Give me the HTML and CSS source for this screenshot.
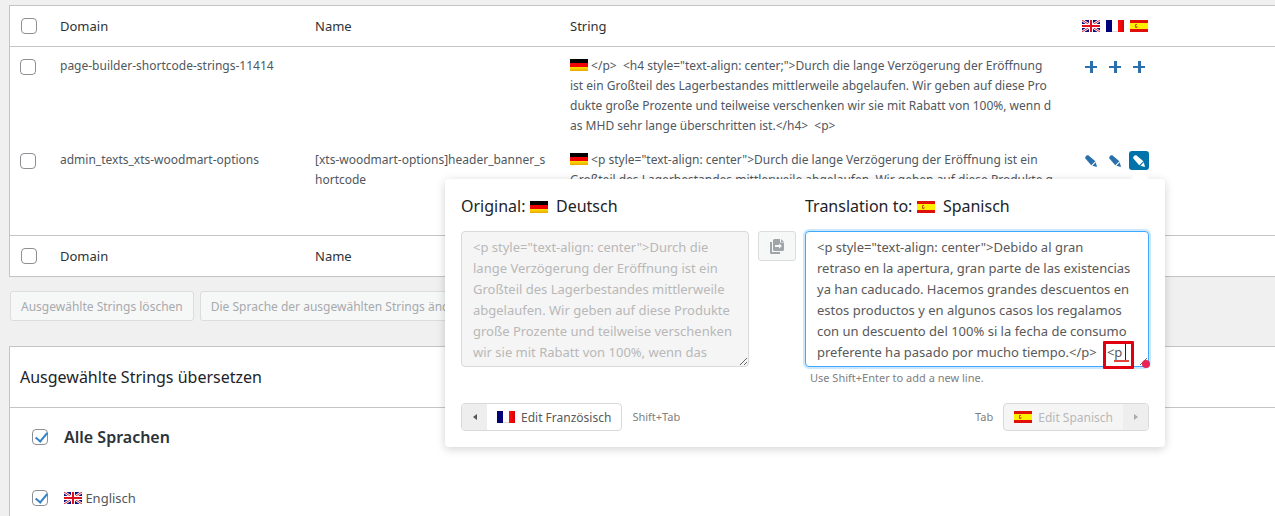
FILE: index.html
```html
<!DOCTYPE html>
<html lang="de">
<head>
<meta charset="utf-8">
<title>String-Übersetzung</title>
<link rel="stylesheet" href="styles.css">
</head>
<body>
<svg class="sprite" aria-hidden="true">
  <defs>
    <linearGradient id="gold" x1="0" y1="0" x2="0" y2="1"><stop offset="0" stop-color="#ffe000"/><stop offset="1" stop-color="#e8a800"/></linearGradient>
    <linearGradient id="red" x1="0" y1="0" x2="1" y2="0"><stop offset="0" stop-color="#ff1010"/><stop offset="1" stop-color="#d80000"/></linearGradient>
  </defs>
  <symbol id="de" viewBox="0 0 18 12"><path fill="#000" d="M0 0h18v4H0z"/><path fill="#f00000" d="M0 4h18v4H0z"/><path fill="url(#gold)" d="M0 8h18v4H0z"/></symbol>
  <symbol id="fr" viewBox="0 0 18 12"><path fill="#000078" d="M0 0h6v12H0z"/><path fill="#fff" d="M6 0h6v12H6z"/><path fill="#ddd" d="M6 11h6v1H6z"/><path fill="url(#red)" d="M12 0h6v12h-6z"/></symbol>
  <symbol id="es" viewBox="0 0 18 12"><path fill="#e01008" d="M0 0h18v12H0z"/><path fill="#ffee00" d="M0 3h18v6H0z"/><path fill="none" stroke="#c05010" d="M7 4.5H5.500v3H7V6"/></symbol>
  <symbol id="gb" viewBox="0 0 18 12"><path fill="#10107c" d="M0 0h18v12H0z"/><path stroke="#fff" stroke-width="2.600" d="M0 0l18 12M18 0L0 12"/><path stroke="#d82030" d="M0 0l18 12M18 0L0 12"/><path stroke="#fff" stroke-width="4" d="M9 0v12M0 6h18"/><path stroke="#e01020" stroke-width="2" d="M9 0v12M0 6h18"/></symbol>
  <symbol id="plus" viewBox="0 0 12 12"><path fill="currentColor" d="M5 0h3v5h4v2H8v5H5V7H0V5h5z"/></symbol>
  <symbol id="pencil" viewBox="0 0 12 12"><path fill="currentColor" d="M0 3Q.3.400 3 0L10.400 6.200 6.200 10.200zM10.800 7.200l1.200 4.800L7.300 10.700z"/></symbol>
  <symbol id="copy" viewBox="0 0 14 15"><path fill="currentColor" d="M0 3h2v10h8v2H1.500Q0 15 0 13.500z"/><path fill="currentColor" d="M4.500 0H10v3.500h4v7q0 1.500-1.500 1.500h-8Q3 12 3 10.500v-9Q3 0 4.500 0zM11 0l3 3h-3zM5 6v2h4v1.600L12 7 9 4.400V6z" fill-rule="evenodd"/></symbol>
</svg>

<main class="page">
  <table class="strings">
    <colgroup><col class="col-check"><col class="col-text"><col class="col-text"><col class="col-string"><col></colgroup>
    <thead>
      <tr>
        <th><input class="check" type="checkbox" aria-label="Alle auswählen"></th>
        <th>Domain</th><th>Name</th><th>String</th>
        <th><div class="langs"><svg class="flag"><use href="#gb"/></svg><svg class="flag"><use href="#fr"/></svg><svg class="flag"><use href="#es"/></svg></div></th>
      </tr>
    </thead>
    <tbody>
      <tr>
        <td><input class="check" type="checkbox" aria-label="page-builder-shortcode-strings-11414"></td>
        <td>page-builder-shortcode-strings-11414</td>
        <td></td>
        <td class="string"><svg class="flag"><use href="#de"/></svg> &lt;/p&gt;&nbsp; &lt;h4 style="text-align: center;"&gt;Durch die lange Verzögerung der Eröffnung<br>ist ein Großteil des Lagerbestandes mittlerweile abgelaufen. Wir geben auf diese Pro<br>dukte große Prozente und teilweise verschenken wir sie mit Rabatt von 100%, wenn d<br>as MHD sehr lange überschritten ist.&lt;/h4&gt;&nbsp; &lt;p&gt;</td>
        <td><div class="langs"><button class="act" aria-label="Englisch hinzufügen"><svg><use href="#plus"/></svg></button><button class="act" aria-label="Französisch hinzufügen"><svg><use href="#plus"/></svg></button><button class="act" aria-label="Spanisch hinzufügen"><svg><use href="#plus"/></svg></button></div></td>
      </tr>
      <tr>
        <td><input class="check" type="checkbox" aria-label="admin_texts_xts-woodmart-options"></td>
        <td>admin_texts_xts-woodmart-options</td>
        <td>[xts-woodmart-options]header_banner_s<br>hortcode</td>
        <td class="string"><svg class="flag"><use href="#de"/></svg> &lt;p style="text-align: center"&gt;Durch die lange Verzögerung der Eröffnung ist ein<br>Großteil des Lagerbestandes mittlerweile abgelaufen. Wir geben auf diese Produkte g<br><br><br></td>
        <td><div class="langs"><button class="act" aria-label="Englisch bearbeiten"><svg><use href="#pencil"/></svg></button><button class="act" aria-label="Französisch bearbeiten"><svg><use href="#pencil"/></svg></button><button class="act act-on" aria-label="Spanisch bearbeiten"><svg><use href="#pencil"/></svg></button></div></td>
      </tr>
    </tbody>
    <tfoot>
      <tr>
        <th><input class="check" type="checkbox" aria-label="Alle auswählen"></th>
        <th>Domain</th><th>Name</th><th></th><th></th>
      </tr>
    </tfoot>
  </table>

  <div class="bulk">
    <button class="bulk-btn" disabled>Ausgewählte Strings löschen</button>
    <button class="bulk-btn" disabled>Die Sprache der ausgewählten Strings ändern</button>
  </div>

  <section class="panel">
    <h2 class="panel-title">Ausgewählte Strings übersetzen</h2>
    <div class="panel-body">
      <label class="lang-row lang-all"><input class="check" type="checkbox" checked>Alle Sprachen</label>
      <label class="lang-row"><input class="check" type="checkbox" checked><span><svg class="flag"><use href="#gb"/></svg> Englisch</span></label>
    </div>
  </section>

  <div class="popover" role="dialog" aria-label="Übersetzung bearbeiten">
    <div class="editor">
      <label class="editor-title" for="original">Original: <svg class="flag"><use href="#de"/></svg>&nbsp; Deutsch</label>
      <label class="editor-title title-target" for="target">Translation to: <svg class="flag"><use href="#es"/></svg>&nbsp; Spanisch</label>
      <textarea class="area" id="original" disabled>&lt;p style="text-align: center"&gt;Durch die
lange Verzögerung der Eröffnung ist ein
Großteil des Lagerbestandes mittlerweile
abgelaufen. Wir geben auf diese Produkte
große Prozente und teilweise verschenken
wir sie mit Rabatt von 100%, wenn das</textarea>
      <button class="copy" disabled aria-label="Original kopieren"><svg><use href="#copy"/></svg></button>
      <div class="target">
        <textarea class="area area-focus" id="target" spellcheck="false">&lt;p style="text-align: center"&gt;Debido al gran
retraso en la apertura, gran parte de las existencias
ya han caducado. Hacemos grandes descuentos en
estos productos y en algunos casos los regalamos
con un descuento del 100% si la fecha de consumo
preferente ha pasado por mucho tiempo.&lt;/p&gt;   &lt;p</textarea>
        <span class="mark"></span>
        <span class="dot"></span>
      </div>
      <p class="hint">Use Shift+Enter to add a new line.</p>
    </div>
    <div class="nav">
      <button class="nav-btn"><span class="nav-arrow"><i class="tri tri-left"></i></span><span class="nav-label"><svg class="flag"><use href="#fr"/></svg>Edit Französisch</span></button>
      <span class="key">Shift+Tab</span>
      <span class="key key-right">Tab</span>
      <button class="nav-btn" disabled><span class="nav-label"><svg class="flag"><use href="#es"/></svg>Edit Spanisch</span><span class="nav-arrow"><i class="tri tri-right"></i></span></button>
    </div>
  </div>
</main>
</body>
</html>
```

FILE: styles.css
```css
* { box-sizing: border-box; }

body {
  margin: 0;
  background: #f0f0f1;
  color: #50575e;
  font: 12px/20px "Noto Sans", "Open Sans", sans-serif;
}

button, textarea { font-family: inherit; }

.sprite { position: absolute; width: 0; height: 0; }

.page {
  position: relative;
  display: flex;
  flex-direction: column;
  min-height: 100vh;
  padding: 5px 0 0 9px;
}

.flag { width: 18px; height: 12px; vertical-align: -1px; }

/* Strings table */
.strings {
  width: 100%;
  table-layout: fixed;
  border-collapse: separate;
  border-spacing: 0;
  background: #fff;
  border: 1px solid #c3c4c7;
  border-right: 0;
}
.col-check { width: 40px; }
.col-text { width: 255px; }
.col-string { width: 512px; }

.strings th {
  height: 41px;
  padding: 0 10px;
  font-size: 13px;
  font-weight: 400;
  text-align: left;
  color: #2c3338;
}
.strings thead th { border-bottom: 1px solid #c3c4c7; }
.strings tfoot th { border-top: 1px solid #c3c4c7; }
.strings td { padding: 9px 10px 5px; vertical-align: top; white-space: nowrap; }
.strings tr > :first-child { padding-right: 0; }
.strings td:first-child { padding-top: 12px; }
.strings .check { margin-left: 1px; }
.strings td .check { margin-left: 0; }
.strings td .langs { padding-top: 1px; }

.check {
  appearance: none;
  display: block;
  flex: none;
  width: 16px;
  height: 16px;
  margin: 0;
  border: 1px solid #8c8f94;
  border-radius: 4px;
  background: #fff;
}
.check:checked::before {
  content: "";
  display: block;
  width: 5px;
  height: 10px;
  margin: 0 0 0 5px;
  border: solid #3582c4;
  border-width: 0 2px 2px 0;
  transform: rotate(40deg);
}

.langs { display: flex; gap: 6px; }
.act {
  display: flex;
  align-items: center;
  justify-content: center;
  width: 20px;
  height: 19px;
  margin: 0 -1px;
  padding: 0;
  border: 0;
  border-radius: 3px;
  background: none;
  color: #2a70ad;
}
.act svg { width: 12px; height: 12px; }
.act-on { background: #0073aa; color: #fff; }

/* Bulk actions */
.bulk { display: flex; gap: 6px; padding: 14px 0 0 1px; }
.bulk-btn {
  height: 30px;
  padding: 0 10px;
  border: 1px solid #dcdcde;
  border-radius: 3px;
  background: #f6f7f7;
  color: #a7aaad;
  font-size: 12px;
  white-space: nowrap;
}

/* Translate panel */
.panel {
  flex: 1;
  margin-top: 25px;
  background: #fff;
  border: 1px solid #c3c4c7;
  border-width: 1px 0 0 1px;
}
.panel-title {
  margin: 0;
  padding: 20px 10px;
  border-bottom: 1px solid #c3c4c7;
  color: #1d2327;
  font-size: 16px;
  font-weight: 400;
}
.panel-body { display: flex; flex-direction: column; gap: 40px; padding: 18px 22px 0; }
.lang-row { display: flex; align-items: center; gap: 16px; height: 21px; font-size: 13px; }
.lang-all { color: #2c3338; font-size: 16px; font-weight: 600; }

/* Translation popover */
.popover {
  position: absolute;
  top: 179px;
  left: 445px;
  width: 720px;
  padding: 16px;
  border-radius: 4px;
  background: #fff;
  box-shadow: 0 2px 10px rgba(0, 0, 0, .18);
}
.popover::before {
  content: "";
  position: absolute;
  top: -6px;
  right: 17px;
  width: 16px;
  height: 16px;
  background: #fff;
  transform: rotate(45deg);
}

.editor { display: grid; grid-template-columns: 288px 38px 1fr; column-gap: 9px; align-items: start; }
.editor-title { margin-bottom: 14px; color: #1d2327; font-size: 16px; line-height: 22px; }
.title-target { grid-column: 3; }
.area {
  display: block;
  width: 100%;
  height: 136px;
  padding: 5px 11px 3px;
  border: 1px solid #d9d9d9;
  border-radius: 4px;
  background: #fff;
  color: #595959;
  font-size: 13px;
  line-height: 21px;
  white-space: pre;
  overflow: hidden;
  resize: both;
}
.area:disabled { background: #f5f5f5; color: #b8b8b8; }
.area-focus { border-color: #40a9ff; box-shadow: 0 0 0 2px #cce8ff; outline: 0; }
.copy {
  display: flex;
  align-items: center;
  justify-content: center;
  height: 30px;
  padding: 0;
  border: 1px solid #dcdcde;
  border-radius: 3px;
  background: #f6f7f7;
  color: #a0a5aa;
}
.copy svg { width: 14px; height: 15px; }

.target { position: relative; }
.mark {
  position: absolute;
  right: 15px;
  bottom: -2px;
  width: 31px;
  height: 28px;
  border: 3px solid #e00010;
  border-radius: 1px;
}
.mark::before {
  content: "";
  position: absolute;
  top: 0;
  right: 5px;
  width: 1px;
  height: 16px;
  background: #222;
}
.mark::after {
  content: "";
  position: absolute;
  right: 2px;
  bottom: 4px;
  width: 15px;
  height: 2px;
  background: #e0443c;
}
.dot {
  position: absolute;
  right: -1px;
  bottom: -1px;
  width: 8px;
  height: 8px;
  border-radius: 50%;
  background: #eb2454;
}
.hint { grid-column: 3; margin: 0; padding: 1px 5px 0; color: #808080; font-size: 11px; }

.nav { display: flex; align-items: center; gap: 10px; margin-top: 15px; }
.nav-btn {
  display: flex;
  height: 28px;
  padding: 0;
  border: 1px solid #d9d9d9;
  border-radius: 4px;
  background: #fff;
  color: #595959;
  font-size: 12px;
  overflow: hidden;
}
.nav-btn:disabled { background: #f5f5f5; color: #b8b8b8; }
.nav-arrow { display: flex; align-items: center; justify-content: center; width: 25px; height: 26px; background: #eee; }
.nav-label { display: flex; align-items: center; gap: 6px; height: 26px; padding: 0 10px; }
.tri { border: solid transparent; border-width: 3px 0; }
.tri-left { border-right: 4px solid #555; }
.tri-right { border-left: 4px solid #aaa; }
.key { color: #808080; font-size: 11px; }
.key-right { margin-left: auto; }
```
